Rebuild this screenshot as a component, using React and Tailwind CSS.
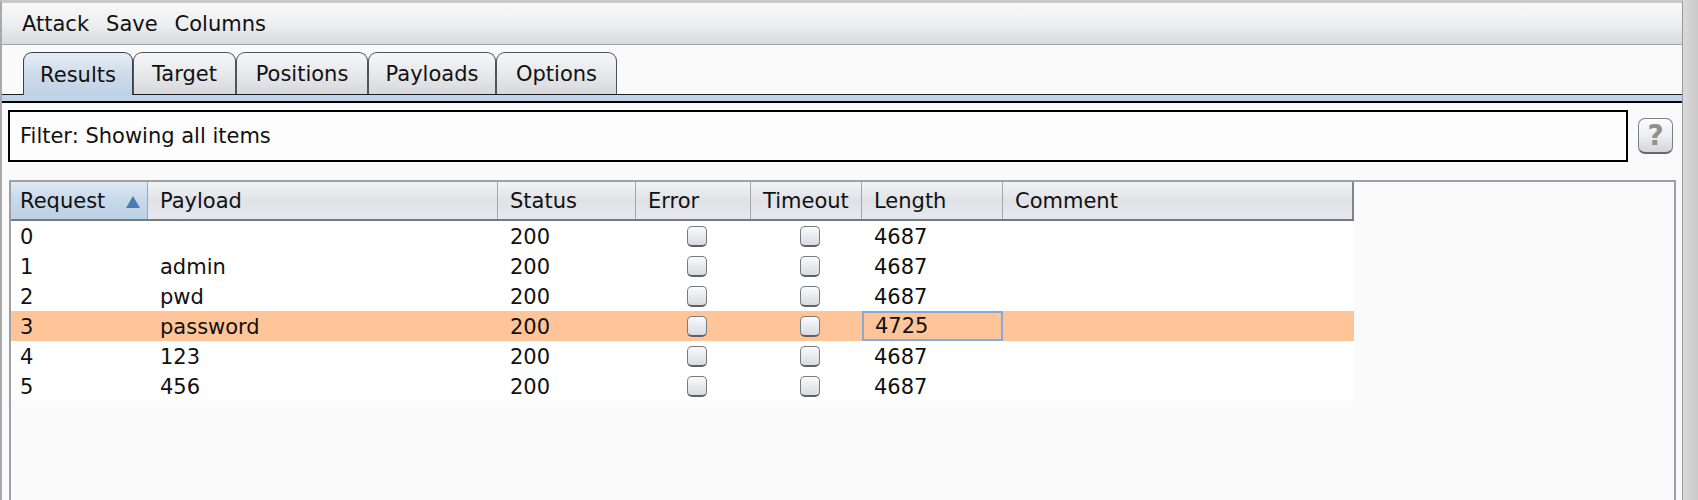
import { useState } from "react";

const TABS = [
  { label: "Results", width: "w-[110px]" },
  { label: "Target", width: "w-[103px]" },
  { label: "Positions", width: "w-[132px]" },
  { label: "Payloads", width: "w-[128px]" },
  { label: "Options", width: "w-[121px]" },
];

const COLUMNS = [
  { key: "request", label: "Request", width: "w-[137px]", sorted: true },
  { key: "payload", label: "Payload", width: "w-[350px]" },
  { key: "status", label: "Status", width: "w-[138px]" },
  { key: "error", label: "Error", width: "w-[115px]", check: true },
  { key: "timeout", label: "Timeout", width: "w-[111px]", check: true },
  { key: "length", label: "Length", width: "w-[141px]" },
  { key: "comment", label: "Comment", width: "w-[351px]" },
];

const ROWS = [
  { request: 0, payload: "", status: 200, length: 4687 },
  { request: 1, payload: "admin", status: 200, length: 4687 },
  { request: 2, payload: "pwd", status: 200, length: 4687 },
  { request: 3, payload: "password", status: 200, length: 4725, selected: true },
  { request: 4, payload: "123", status: 200, length: 4687 },
  { request: 5, payload: "456", status: 200, length: 4687 },
];

export default function App() {
  const [activeTab, setActiveTab] = useState("Results");

  return (
    <div className="w-[1698px] h-[500px] overflow-hidden flex bg-[#d0d0d0] font-['DejaVu_Sans','Liberation_Sans',sans-serif] text-[21px] text-[#111]">
      <div className="w-[1683px] h-full flex flex-col overflow-hidden bg-[#fafafa] border-l-2 border-l-[#a9a9a9] border-r border-r-[#989898] border-t-[3px] border-t-[#c9c9c9]">
        <MenuBar />
        <TabStrip activeTab={activeTab} onSelect={setActiveTab} />
        <div className="h-[6px] shrink-0 bg-[#c0d3e7]" />
        <div className="h-[2px] shrink-0 bg-black" />
        <div className="shrink-0 pt-[7px]">
          <FilterRow />
          <ResultsTable />
        </div>
      </div>
      <div className="flex-1 h-full bg-gradient-to-r from-[#dadada] to-[#c9c9c9]" />
    </div>
  );
}

function MenuBar() {
  return (
    <div className="h-[42px] shrink-0 flex items-center gap-[17px] pl-[20px] pt-[3px] bg-gradient-to-b from-[#f8f8f8] via-[#eeeff1] to-[#d7dadf] border-b border-[#a2a4a9]">
      <span>Attack</span>
      <span>Save</span>
      <span>Columns</span>
    </div>
  );
}

function TabStrip({ activeTab, onSelect }) {
  return (
    <div className="h-[50px] shrink-0 flex items-end pl-[21px] border-b border-[#1e1e1e]">
      {TABS.map((tab) => {
        const active = tab.label === activeTab;
        return (
          <button
            key={tab.label}
            onClick={() => onSelect(tab.label)}
            className={
              active
                ? `${tab.width} h-[43px] -mb-px flex items-center justify-center pt-[3px] rounded-t-[9px] border border-b-0 border-[#3b4048] bg-gradient-to-b from-[#e6edf4] via-[#cfdcea] to-[#bdd1e5]`
                : `${tab.width} h-[42px] flex items-center justify-center pt-[3px] rounded-t-[9px] border border-b-0 border-[#50535a] bg-gradient-to-b from-[#f6f6f8] via-[#e8e9ec] to-[#d6d8dd]`
            }
          >
            {tab.label}
          </button>
        );
      })}
    </div>
  );
}

function FilterRow() {
  return (
    <div className="flex items-center">
      <div className="ml-[6px] w-[1620px] h-[52px] flex items-center pl-[10px] pt-[2px] bg-[#fdfdfd] border-2 border-black">
        Filter: Showing all items
      </div>
      <div className="ml-[10px] w-[35px] h-[36px] flex items-center justify-center rounded-[7px] border border-[#7c7f85] border-b-2 border-b-[#65686e] bg-gradient-to-b from-[#fdfdfd] via-[#eceef1] to-[#d3d6dc] text-[28px] font-bold leading-none text-[#909090]">
        ?
      </div>
    </div>
  );
}

function ResultsTable() {
  return (
    <div className="ml-[7px] mt-[18px] w-[1667px] h-[340px] border-2 border-[#9da0a6] bg-[#fafafa]">
      <div className="flex h-[39px] w-fit border-b-2 border-[#777a81]">
        {COLUMNS.map((col) => (
          <HeaderCell key={col.key} col={col} />
        ))}
      </div>
      {ROWS.map((row) => (
        <ResultRow key={row.request} row={row} />
      ))}
    </div>
  );
}

function HeaderCell({ col }) {
  if (col.sorted) {
    return (
      <div
        className={`${col.width} h-full flex items-center justify-between pl-[9px] pr-[7px] pt-[2px] border-r border-[#a3a6ac] bg-gradient-to-b from-[#dfe9f3] via-[#c7d8e9] to-[#bcd0e4]`}
      >
        <span>{col.label}</span>
        <svg width="14" height="12" viewBox="0 0 14 12">
          <polygon points="7,0 14,12 0,12" fill="#4a7bb1" />
        </svg>
      </div>
    );
  }
  return (
    <div
      className={`${col.width} h-full flex items-center pl-[12px] pt-[2px] border-r border-[#a3a6ac] last:border-r-2 last:border-[#80838a] bg-gradient-to-b from-[#f2f3f5] via-[#e0e2e6] to-[#e5e8ee]`}
    >
      {col.label}
    </div>
  );
}

function ResultRow({ row }) {
  return (
    <div
      className={`flex h-[30px] w-fit ${row.selected ? "bg-[#ffc598]" : "bg-white"}`}
    >
      {COLUMNS.map((col) => {
        if (col.check) {
          return (
            <div
              key={col.key}
              className={`${col.width} h-full flex items-center justify-center pl-[6px] pt-[1px]`}
            >
              <Checkbox />
            </div>
          );
        }
        const focused = row.selected && col.key === "length";
        return (
          <div
            key={col.key}
            className={
              focused
                ? `${col.width} h-full flex items-center pl-[11px] pt-[2px] border-2 border-[#82abd8]`
                : `${col.width} h-full flex items-center pt-[3px] ${col.key === "request" ? "pl-[9px]" : "pl-[12px]"}`
            }
          >
            {col.key === "comment" ? "" : row[col.key]}
          </div>
        );
      })}
    </div>
  );
}

function Checkbox() {
  return (
    <div className="w-[20px] h-[21px] rounded-[5px] border border-[#777a80] border-b-2 border-b-[#5e6167] bg-gradient-to-b from-[#fbfbfc] via-[#e9eaee] to-[#dadce2]" />
  );
}
